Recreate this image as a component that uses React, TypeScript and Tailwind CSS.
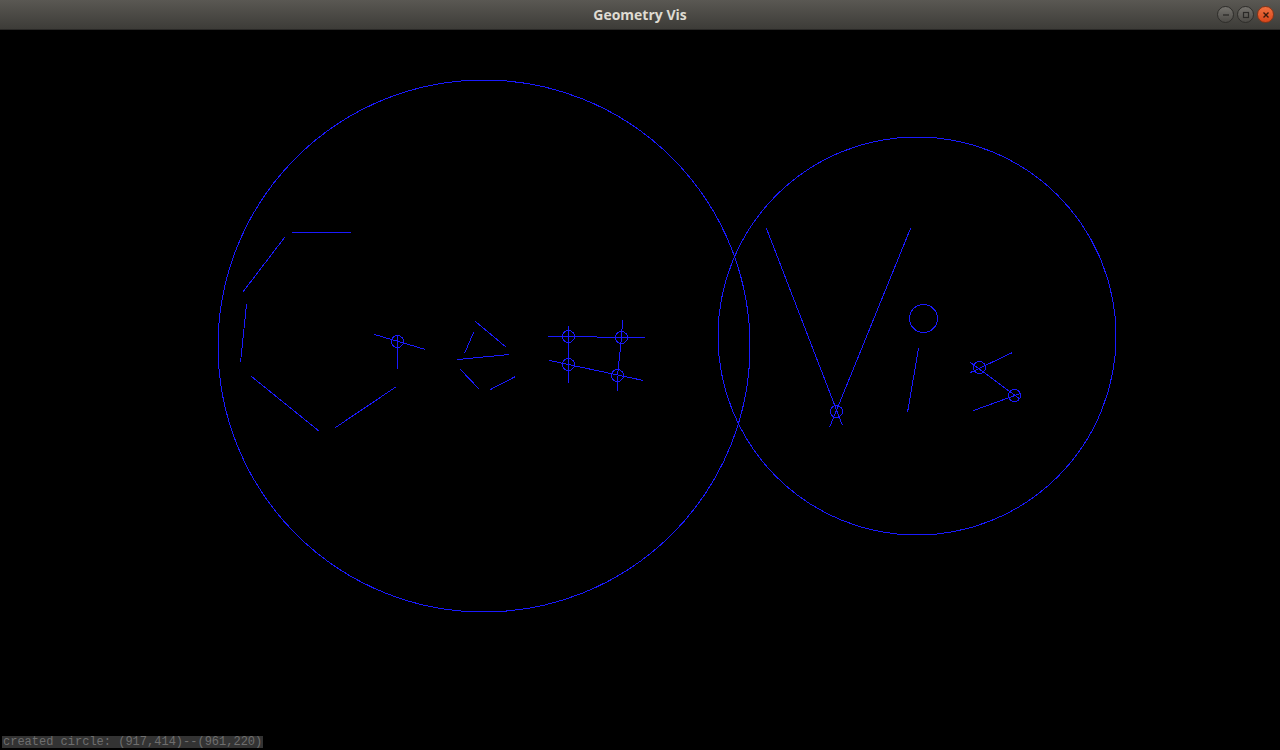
import React from "react";

const BLUE = "#1a1aff";

type Seg = [number, number, number, number];

const segs: Seg[] = [
  // G
  [291, 232, 350, 232],
  [284, 237, 242, 292],
  [246, 304, 240, 362],
  [251, 376, 319, 431],
  [335, 427, 396, 386],
  [374, 334, 425, 349],
  [397, 334, 397, 368],
  // e
  [475, 321, 506, 347],
  [473, 332, 464, 353],
  [457, 359, 509, 354],
  [460, 369, 479, 389],
  [490, 389, 515, 376],
  // o
  [547, 336, 596, 336],
  [596, 337, 644, 337],
  [568, 325, 568, 382],
  [622, 320, 621, 337],
  [621, 337, 617, 375],
  [617, 375, 617, 390],
  [549, 360, 643, 380],
  // V
  [766, 228, 842, 425],
  [910, 228, 829, 427],
  // i
  [918, 348, 907, 412],
  // s
  [1012, 352, 970, 372],
  [970, 362, 1020, 399],
  [973, 410, 1020, 393],
];

const smallCircles: [number, number, number][] = [
  [397, 341, 6],
  [568, 336, 6],
  [621, 337, 6],
  [568, 364, 6],
  [617, 375, 6],
  [836, 411, 6],
  [923, 318, 14],
  [979, 367, 6],
  [1014, 395, 6],
];

const grayBtn =
  "w-[17px] h-[17px] rounded-full flex items-center justify-center bg-gradient-to-b from-[#74726d] to-[#4c4a46] border border-[#2e2d2a]";

export default function App() {
  return (
    <div className="w-[1280px] h-[750px] flex flex-col bg-black overflow-hidden">
      <div className="h-[30px] relative flex items-center justify-center bg-gradient-to-b from-[#5a5853] to-[#3d3c38] border-b border-[#2a2927]">
        <span
          className="text-[14px] font-bold text-[#dfdbd2]"
          style={{ fontFamily: '"Open Sans", "DejaVu Sans", sans-serif' }}
        >
          Geometry Vis
        </span>
        <div className="absolute right-[6px] top-[6px] flex gap-[3px]">
          <div className={grayBtn}>
            <svg width="8" height="8" viewBox="0 0 8 8">
              <path d="M1 4 H7" stroke="#2a2927" strokeWidth="1.3" />
            </svg>
          </div>
          <div className={grayBtn}>
            <svg width="8" height="8" viewBox="0 0 8 8">
              <rect x="1.5" y="1.5" width="5" height="5" fill="none" stroke="#2a2927" strokeWidth="1.2" />
            </svg>
          </div>
          <div className="w-[17px] h-[17px] rounded-full flex items-center justify-center bg-gradient-to-b from-[#f0703f] to-[#d9461a] border border-[#8a3416]">
            <svg width="8" height="8" viewBox="0 0 8 8">
              <path d="M1.5 1.5 L6.5 6.5 M6.5 1.5 L1.5 6.5" stroke="#3a1a0c" strokeWidth="1.4" />
            </svg>
          </div>
        </div>
      </div>
      <div className="flex-1 relative bg-black">
        <svg
          className="absolute inset-0"
          width="1280"
          height="720"
          viewBox="0 30 1280 720"
          shapeRendering="crispEdges"
        >
          <circle cx="484" cy="346" r="266" fill="none" stroke={BLUE} strokeWidth="1" />
          <circle cx="917" cy="336" r="199" fill="none" stroke={BLUE} strokeWidth="1" />
          {segs.map((s, i) => (
            <line
              key={i}
              x1={s[0] + 0.5}
              y1={s[1] + 0.5}
              x2={s[2] + 0.5}
              y2={s[3] + 0.5}
              stroke={BLUE}
              strokeWidth="1"
            />
          ))}
          {smallCircles.map((c, i) => (
            <circle
              key={i}
              cx={c[0] + 0.5}
              cy={c[1] + 0.5}
              r={c[2]}
              fill="none"
              stroke={BLUE}
              strokeWidth="1"
            />
          ))}
        </svg>
        <div
          className="absolute left-[2px] bottom-[2px] h-[12px] bg-[#333333] text-[#6e6e6e] text-[12px] leading-[12px] px-[1px] whitespace-pre"
          style={{ fontFamily: '"Liberation Mono", "DejaVu Sans Mono", monospace' }}
        >
          created circle: (917,414)--(961,220)
        </div>
      </div>
    </div>
  );
}
